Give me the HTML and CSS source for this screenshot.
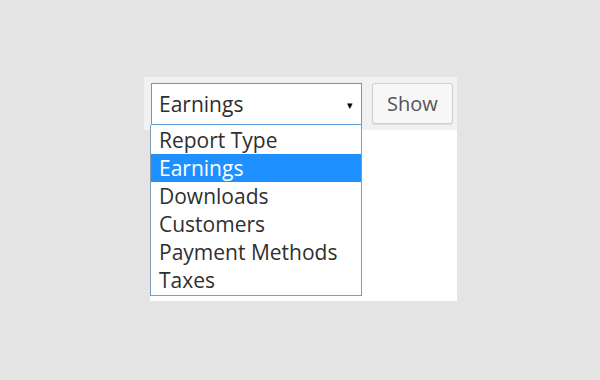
FILE: index.html
```html
<!DOCTYPE html>
<html lang="en">
  <head>
    <meta charset="UTF-8" />
    <title>Reports</title>
    <link rel="stylesheet" href="styles.css">
  </head>
  <body>
    <div class="panel">
      <div class="toolbar">
        <div class="picker">
          <div class="select">
            <span>Earnings</span>
            <span class="arrow">&#9662;</span>
          </div>
          <!-- open dropdown list -->
          <ul class="options">
            <li>Report Type</li>
            <li class="active">Earnings</li>
            <li>Downloads</li>
            <li>Customers</li>
            <li>Payment Methods</li>
            <li>Taxes</li>
          </ul>
        </div>
        <button class="btn">Show</button>
      </div>
      <div class="content"></div>
    </div>
  </body>
</html>
```

FILE: styles.css
```css
:root {
  --page: #e5e4e4;
  --bar: #f1f1f1;
  --text: #2f2f2f;
  --focus: #5b9dd9;
  --list-border: #7f9db9;
  --highlight: #1e90ff;
}

body {
  margin: 0;
  background: var(--page);
  font-family: "Open Sans", sans-serif;
  color: var(--text);
}

.panel {
  width: 313px;
  margin: 77px 0 0 144px;
}

.toolbar {
  display: flex;
  align-items: flex-start;
  gap: 10px;
  height: 53px;
  padding: 6px 4px 0 7px;
  box-sizing: border-box;
  background: var(--bar);
}

.picker {
  position: relative;
}

.select {
  display: flex;
  align-items: center;
  justify-content: space-between;
  width: 211px;
  height: 42px;
  padding: 0 8px 0 7px;
  box-sizing: border-box;
  border: 1px solid var(--focus);
  background: #fff;
  font-size: 21px;
}

.arrow {
  font-size: 11px;
  color: #000;
}

.options {
  position: absolute;
  top: 42px;
  left: -1px;
  width: 212px;
  margin: 0;
  padding: 0 0 1px;
  list-style: none;
  box-sizing: border-box;
  border: 1px solid var(--list-border);
  border-top: none;
  background: #fff;
  font-size: 21px;
}

.options li {
  height: 28px;
  line-height: 29px;
  padding-left: 8px;
}

.options li:first-child {
  margin-top: 1px;
}

.options .active {
  background: var(--highlight);
  color: #fff;
}

.btn {
  width: 81px;
  height: 41px;
  border: 1px solid #ccc;
  border-radius: 3px;
  background: #f7f7f7;
  box-shadow: 0 1px 0 #ddd;
  font-family: inherit;
  font-size: 20px;
  color: #555;
}

.content {
  height: 171px;
  margin-left: 6px;
  background: #fff;
}
```
